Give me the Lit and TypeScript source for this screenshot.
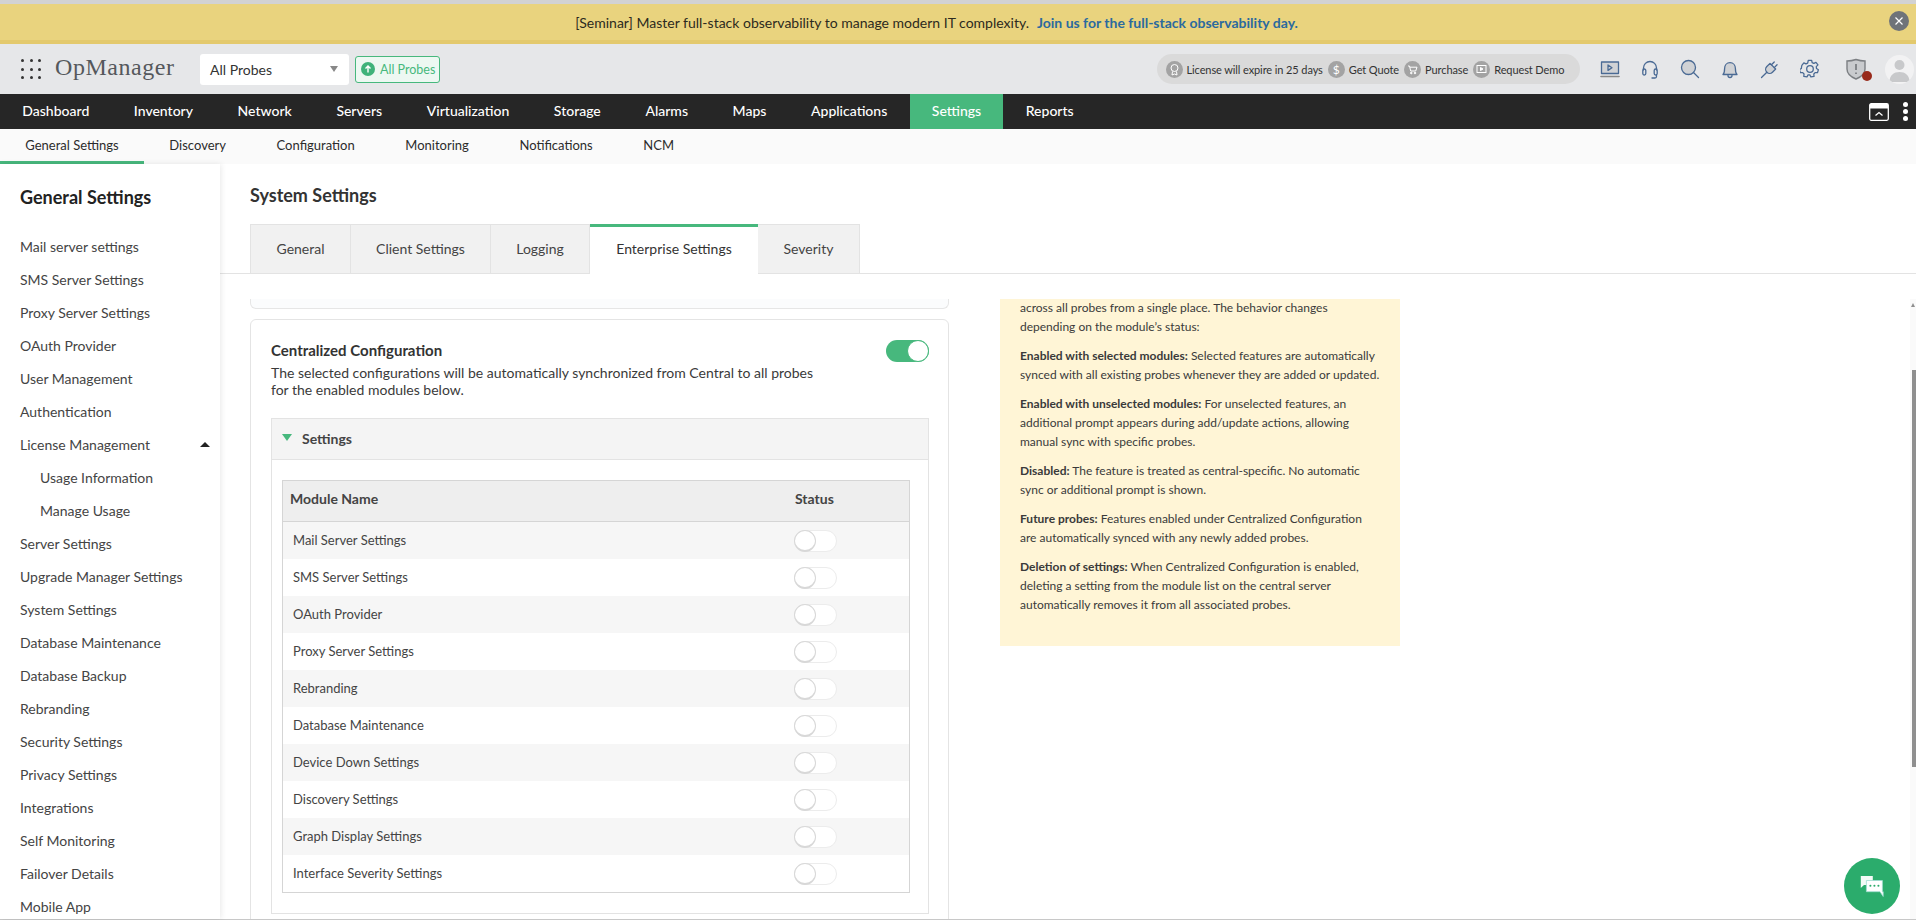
import { LitElement, html, css, svg } from "lit";
import { customElement } from "lit/decorators.js";

const NAV = ["Dashboard","Inventory","Network","Servers","Virtualization","Storage","Alarms","Maps","Applications","Settings","Reports"];
const SUB = ["General Settings","Discovery","Configuration","Monitoring","Notifications","NCM"];
const SIDE: [string, boolean][] = [
  ["Mail server settings",false],["SMS Server Settings",false],["Proxy Server Settings",false],["OAuth Provider",false],
  ["User Management",false],["Authentication",false],["License Management",false],["Usage Information",true],["Manage Usage",true],
  ["Server Settings",false],["Upgrade Manager Settings",false],["System Settings",false],["Database Maintenance",false],
  ["Database Backup",false],["Rebranding",false],["Security Settings",false],["Privacy Settings",false],["Integrations",false],
  ["Self Monitoring",false],["Failover Details",false],["Mobile App",false],
];
const TABS = ["General","Client Settings","Logging","Enterprise Settings","Severity"];
const TAB_W = [101, 140, 99, 168, 102];
const MODS = ["Mail Server Settings","SMS Server Settings","OAuth Provider","Proxy Server Settings","Rebranding","Database Maintenance","Device Down Settings","Discovery Settings","Graph Display Settings","Interface Severity Settings"];

const ic = (body: unknown) => html`<svg width="20" height="20" viewBox="0 0 20 20" fill="#d0d2d5" stroke="#4a6a94" stroke-width="1.3" stroke-linecap="round" stroke-linejoin="round">${body}</svg>`;

@customElement("app-root")
export class AppRoot extends LitElement {
  static styles = css`
    :host { display: block; width: 1916px; height: 920px; overflow: hidden; font-family: Lato, "Open Sans", sans-serif; color: #333; background: #fff; }
    * { box-sizing: border-box; }
    .topline { height: 4px; background: #d2d2d2; }
    .banner { height: 40px; background: #e9d37e; border-bottom: 4px solid #e3c96d; display: flex; align-items: center; justify-content: center; gap: 8px; font-size: 14px; color: #2c2a20; position: relative; padding-right: 43px; }
    .banner a { color: #2b6a9e; font-weight: 700; }
    .close { position: absolute; right: 7px; top: 7px; width: 20px; height: 20px; border-radius: 50%; background: #6f7379; color: #fff; display: flex; align-items: center; justify-content: center; }
    .head { height: 50px; background: #e6e7e9; display: flex; align-items: center; }
    .dots { width: 20px; height: 20px; margin-left: 21px; display: grid; grid-template-columns: repeat(3, 3px); justify-content: space-between; align-content: space-between; }
    .dots i { width: 3px; height: 3px; border-radius: 50%; background: #333; }
    .logo { font-family: "Liberation Serif", serif; font-size: 24px; margin-left: 14px; padding-bottom: 4px; color: #55585c; width: 145px; letter-spacing: .55px; }
    .select { width: 149px; height: 31px; background: #fff; border-radius: 3px; display: flex; align-items: center; justify-content: space-between; padding: 0 11px 0 10px; font-size: 14px; color: #333; }
    .select i { width: 0; height: 0; border: 4.5px solid transparent; border-top: 6px solid #888; border-bottom: 0; }
    .probe { width: 85px; height: 27px; margin-left: 6px; border: 1px solid #47b87d; border-radius: 3px; background: #edf8f2; color: #47b87d; font-size: 12.5px; display: flex; align-items: center; gap: 5px; padding-left: 5px; white-space: nowrap; }
    .probe svg { flex: none; }
    .pill { margin-left: auto; width: 423px; height: 30px; border-radius: 15px; background: #dadada; display: flex; align-items: center; padding-left: 9px; gap: 5px; font-size: 11px; letter-spacing: -.1px; color: #333; white-space: nowrap; }
    .pill .grp { display: flex; align-items: center; gap: 4px; }
    .pc { width: 17px; height: 17px; border-radius: 50%; background: #a3a3a3; display: flex; align-items: center; justify-content: center; color: #fff; font-size: 12px; flex: none; }
    .icons { display: flex; align-items: center; margin-left: 20px; }
    .icons > svg { display: block; margin-right: 20px; }
    .shield { position: relative; width: 22px; height: 22px; margin: 0 18.5px 0 5px; }
    .shield i { position: absolute; right: -5px; bottom: -1px; width: 10px; height: 10px; border-radius: 50%; background: #98291a; }
    .avatar { width: 29px; height: 29px; border-radius: 50%; background: #f2f2f3; margin-right: 2px; overflow: hidden; flex: none; }
    .nav { height: 35px; background: #262626; display: flex; font-size: 14px; font-weight: 500; color: #fff; }
    .nav div { padding: 0 22.3px 2px; display: flex; align-items: center; }
    .nav .on { background: #47b87d; }
    .navr { margin-left: auto; display: flex; align-items: center; gap: 14px; padding-right: 8px; }
    .kebab { display: grid; gap: 2px; }
    .kebab i { width: 5px; height: 5px; border-radius: 50%; background: #fff; display: block; }
    .sub { height: 35px; background: #fafafa; display: flex; font-size: 13px; color: #2c2c2c; }
    .sub div { padding: 0 25.3px 4px; display: flex; align-items: center; }
    .sub .on { border-bottom: 3px solid #47b87d; padding-bottom: 1px; }
    .main { display: flex; height: 756px; border-bottom: 1px solid #c8c8c8; }
    .side { width: 220px; flex: none; padding: 22px 0 0 20px; box-shadow: 1px 0 6px rgba(0,0,0,.09); overflow: hidden; position: relative; }
    .side h2 { margin: 0 0 22px; font-size: 18px; line-height: 22px; font-weight: 700; color: #222; }
    .side .it { height: 33px; line-height: 33px; font-size: 14px; color: #444; position: relative; }
    .side .s { padding-left: 20px; }
    .up { position: absolute; right: 10px; top: 14px; width: 0; height: 0; border: 5px solid transparent; border-bottom: 5px solid #222; border-top: 0; }
    .cont { flex: 1; display: flex; flex-direction: column; min-width: 0; }
    .cont h1 { margin: 0; padding: 20px 0 0 30px; height: 60px; font-size: 18px; line-height: 22px; font-weight: 700; color: #333; }
    .tabs { height: 50px; border-bottom: 1px solid #e3e3e3; padding-left: 30px; display: flex; flex: none; }
    .tab { height: 50px; border: 1px solid #e3e3e3; border-left-width: 0; background: #f1f1f1; font-size: 14px; display: flex; align-items: center; justify-content: center; color: #444; padding-bottom: 2px; }
    .tab:first-child { border-left-width: 1px; }
    .tab.on { background: #fff; border: 0; border-top: 3px solid #47b87d; color: #333; padding-bottom: 4px; }
    .scroll { flex: 1; min-height: 0; margin-top: 25px; display: flex; overflow: hidden; padding-left: 30px; position: relative; }
    .col { width: 699px; flex: none; }
    .stub { height: 10px; border: 1px solid #e6e6e6; border-top: 0; border-radius: 0 0 6px 6px; background: #fbfcfd; }
    .card { margin-top: 10px; height: 640px; border: 1px solid #e4e4e4; border-radius: 6px 6px 0 0; padding: 20px 19px 0 20px; position: relative; }
    .card h3 { margin: 0; font-size: 15px; line-height: 20px; font-weight: 700; color: #333; }
    .card p { margin: 4px 0 0; font-size: 14px; line-height: 17px; width: 560px; color: #3a3a3a; }
    .bigt { position: absolute; right: 19px; top: 20px; width: 43px; height: 22px; border-radius: 11px; background: #47b87d; }
    .bigt i { position: absolute; right: 0; top: 0; width: 22px; height: 22px; border-radius: 50%; background: #fff; border: 1px solid #47b87d; }
    .acc { margin-top: 20px; border: 1px solid #e3e3e3; height: 496px; padding: 0 10px; }
    .acch { margin: 0 -10px; height: 41px; background: #f4f4f4; border-bottom: 1px solid #e3e3e3; display: flex; align-items: center; padding: 0 0 1px 10px; gap: 10px; font-size: 14px; font-weight: 700; color: #444; }
    .acch i { width: 0; height: 0; border: 5px solid transparent; border-top: 7px solid #47b87d; border-bottom: 0; margin-bottom: 2px; }
    .tbl { margin-top: 20px; border: 1px solid #d5d5d5; width: 628px; }
    .th { height: 41px; background: #eee; border-bottom: 1px solid #d5d5d5; display: flex; align-items: center; padding: 0 0 6px 7px; font-size: 14px; font-weight: 700; color: #444; }
    .th span:last-child { margin-left: auto; width: 114px; }
    .tr { height: 37px; display: flex; align-items: center; padding-left: 10px; font-size: 13px; color: #444; justify-content: space-between; }
    .tr span:first-child { padding-bottom: 2px; }
    .tr:nth-child(odd) { background: #f6f6f6; }
    .tg { width: 43px; height: 22px; border-radius: 11px; border: 1px solid #ececec; background: #fff; margin-right: 72px; position: relative; flex: none; }
    .tg i { position: absolute; left: -1px; top: -1px; width: 22px; height: 22px; border-radius: 50%; background: #fff; border: 1px solid #d8d8d8; border-bottom-width: 2px; }
    .note { margin: -1px 0 0 51px; width: 400px; height: 348px; background: #fff5d6; padding: 0 20px; font-size: 12px; line-height: 19px; color: #3a3a3a; flex: none; }
    .note div { margin-bottom: 10px; }
    .note b { font-weight: 700; }
    .bar { position: absolute; right: 0; top: 0; bottom: 0; width: 6px; background: #fafafa; }
    .bar i { position: absolute; top: 71px; height: 397px; left: 2px; right: 0; background: #8f8f8f; }
    .bar u { position: absolute; top: 4px; left: 1px; width: 0; height: 0; border: 2.5px solid transparent; border-bottom: 4px solid #8f8f8f; border-top: 0; }
    .chat { position: absolute; right: 16px; bottom: 5px; width: 56px; height: 56px; border-radius: 50%; background: #2bac6c; display: flex; align-items: center; justify-content: center; }
  `;

  render() {
    return html`
      <div class="topline"></div>
      <div class="banner"><span>[Seminar] Master full-stack observability to manage modern IT complexity.</span><a>Join us for the full-stack observability day.</a>
        <div class="close"><svg width="10" height="10" viewBox="0 0 10 10" stroke="#fff" stroke-width="1.2"><path d="M1.5 1.5l7 7M8.5 1.5l-7 7"/></svg></div></div>
      <div class="head">
        <div class="dots">${Array.from({ length: 9 }, () => html`<i></i>`)}</div>
        <div class="logo">OpManager</div>
        <div class="select">All Probes<i></i></div>
        <div class="probe"><svg width="14" height="14" viewBox="0 0 14 14"><circle cx="7" cy="7" r="7" fill="#3fb27a"/><path d="M7 10.5V4M4.5 6.5L7 4l2.5 2.5" stroke="#fff" stroke-width="1.4" fill="none"/></svg>All Probes</div>
        <div class="pill">
          <div class="grp"><span class="pc"><svg width="11" height="13" viewBox="0 0 11 13" fill="none" stroke="#fff"><circle cx="5.5" cy="5" r="3.5"/><path d="M3.5 8.5L3 12l2.5-1L8 12l-.5-3.5"/></svg></span>License will expire in 25 days</div>
          <div class="grp"><span class="pc">$</span>Get Quote</div>
          <div class="grp"><span class="pc"><svg width="11" height="11" viewBox="0 0 11 11" fill="none" stroke="#fff"><path d="M1 2h1.5l1.2 5h5L10 3.2H3"/><circle cx="4.3" cy="9" r=".8" fill="#fff"/><circle cx="8" cy="9" r=".8" fill="#fff"/></svg></span>Purchase</div>
          <div class="grp"><span class="pc"><svg width="11" height="11" viewBox="0 0 11 11" fill="none" stroke="#fff"><rect x="1" y="1.5" width="9" height="7"/><path d="M4.5 3.5l2.5 1.5-2.5 1.5z" fill="#fff"/></svg></span>Request Demo</div>
        </div>
        <div class="icons">
          ${ic(svg`<rect x="1.5" y="3" width="17" height="11.5"/><path d="M8 6l4 2.7-4 2.7z" fill="none"/><path d="M1 17.5h18" stroke="#888" stroke-width="1.6"/>`)}
          ${ic(svg`<path d="M3.5 11V9a6.5 6.5 0 0 1 13 0v2" fill="none"/><rect x="2.8" y="10" width="3" height="6" rx="1.5" fill="none"/><rect x="14.2" y="10" width="3" height="6" rx="1.5" fill="none"/><path d="M16.5 16v1.5a1.5 1.5 0 0 1-1.5 1.5h-3" fill="none"/>`)}
          ${ic(svg`<circle cx="8.5" cy="8.5" r="7"/><path d="M13.5 13.5l5 5" fill="none"/>`)}
          ${ic(svg`<path d="M3 15.5c1.5-1.5 1.6-3.5 1.6-6 0-3.3 2.2-5.8 5.4-5.8s5.4 2.5 5.4 5.8c0 2.5.1 4.5 1.6 6z"/><path d="M8 16.5a2 2 0 0 0 4 0" fill="none"/>`)}
          ${ic(svg`<g transform="rotate(45 10 10)"><path d="M6 6h8v4.5a4 4 0 0 1-8 0z"/><path d="M8 6V2M12 6V2M10 14.5V22" fill="none"/></g>`)}
          ${ic(svg`<path d="M8.3 1.5h3.4l.5 2.4 1.7.8 2.2-1.1 2 2.6-1.7 1.8.2 1.9 2 1.2-1 3.1-2.4-.1-1.3 1.4.2 2.4-3.2.6-1.1-2.1h-1.8l-1.1 2.1-3.2-.6.2-2.4-1.3-1.4-2.4.1-1-3.1 2-1.2.2-1.9L1.7 6.7l2-2.6 2.2 1.1 1.7-.8z" fill="none" transform="translate(.2 -.2) scale(.98)"/><circle cx="10" cy="10" r="3.3" fill="none"/>`)}
          <div class="shield"><svg width="22" height="22" viewBox="0 0 22 22" fill="#c9cbce" stroke="#7c7f83" stroke-width="1.4"><path d="M2 3c3 0 6-.5 9-1.5 3 1 6 1.5 9 1.5v8c0 4.5-4 8-9 10-5-2-9-5.5-9-10z"/><path d="M11 6v6M11 14.5v1.5" stroke-width="1.8"/></svg><i></i></div>
          <div class="avatar"><svg width="29" height="29" viewBox="0 0 29 29" fill="#c8c9cb"><circle cx="14.5" cy="10" r="5"/><path d="M4.5 27c0-7 4.5-10 10-10s10 3 10 10z"/></svg></div>
        </div>
      </div>
      <div class="nav">
        ${NAV.map((n) => html`<div class=${n === "Settings" ? "on" : ""}>${n}</div>`)}
        <span class="navr">
          <svg width="20" height="18" viewBox="0 0 20 18"><rect x=".7" y=".7" width="18.6" height="16.6" rx="1.5" fill="none" stroke="#fff" stroke-width="1.3"/><rect x="1" y="1" width="18" height="4.5" fill="#fff"/><path d="M6.5 12.5l3.5-3 3.5 3" fill="none" stroke="#fff" stroke-width="1.3"/></svg>
          <span class="kebab"><i></i><i></i><i></i></span>
        </span>
      </div>
      <div class="sub">${SUB.map((s, i) => html`<div class=${i === 0 ? "on" : ""}>${s}</div>`)}</div>
      <div class="main">
        <div class="side">
          <h2>General Settings</h2>
          ${SIDE.map(([t, s]) => html`<div class="it ${s ? "s" : ""}">${t}${t === "License Management" ? html`<span class="up"></span>` : ""}</div>`)}
        </div>
        <div class="cont">
          <h1>System Settings</h1>
          <div class="tabs">
            ${TABS.map((t, i) => html`<div class="tab ${i === 3 ? "on" : ""}" style="width:${TAB_W[i]}px">${t}</div>`)}
          </div>
          <div class="scroll">
            <div class="col">
              <div class="stub"></div>
              <div class="card">
                <h3>Centralized Configuration</h3>
                <p>The selected configurations will be automatically synchronized from Central to all probes for the enabled modules below.</p>
                <div class="bigt"><i></i></div>
                <div class="acc">
                  <div class="acch"><i></i>Settings</div>
                  <div class="tbl">
                    <div class="th"><span>Module Name</span><span>Status</span></div>
                    <div>${MODS.map((m) => html`<div class="tr"><span>${m}</span><span class="tg"><i></i></span></div>`)}</div>
                  </div>
                </div>
              </div>
            </div>
            <div class="note">
              <div>across all probes from a single place. The behavior changes depending on the module’s status:</div>
              <div><b>Enabled with selected modules:</b> Selected features are automatically synced with all existing probes whenever they are added or updated.</div>
              <div><b>Enabled with unselected modules:</b> For unselected features, an additional prompt appears during add/update actions, allowing manual sync with specific probes.</div>
              <div><b>Disabled:</b> The feature is treated as central-specific. No automatic sync or additional prompt is shown.</div>
              <div><b>Future probes:</b> Features enabled under Centralized Configuration are automatically synced with any newly added probes.</div>
              <div><b>Deletion of settings:</b> When Centralized Configuration is enabled, deleting a setting from the module list on the central server automatically removes it from all associated probes.</div>
            </div>
            <div class="bar"><u></u><i></i></div>
            <div class="chat"><svg width="24" height="23" viewBox="0 0 30 28"><path d="M1 1h15v11H5l-4 4z" fill="#fff" opacity=".95"/><path d="M8 6.5h20v14h1v6l-4-6H8z" fill="#fff" stroke="#9fdcd0" stroke-width="1"/><circle cx="13" cy="13" r="1.3" fill="#2bac6c"/><circle cx="18" cy="13" r="1.3" fill="#2bac6c"/><circle cx="23" cy="13" r="1.3" fill="#2bac6c"/></svg></div>
          </div>
        </div>
      </div>
    `;
  }
}
